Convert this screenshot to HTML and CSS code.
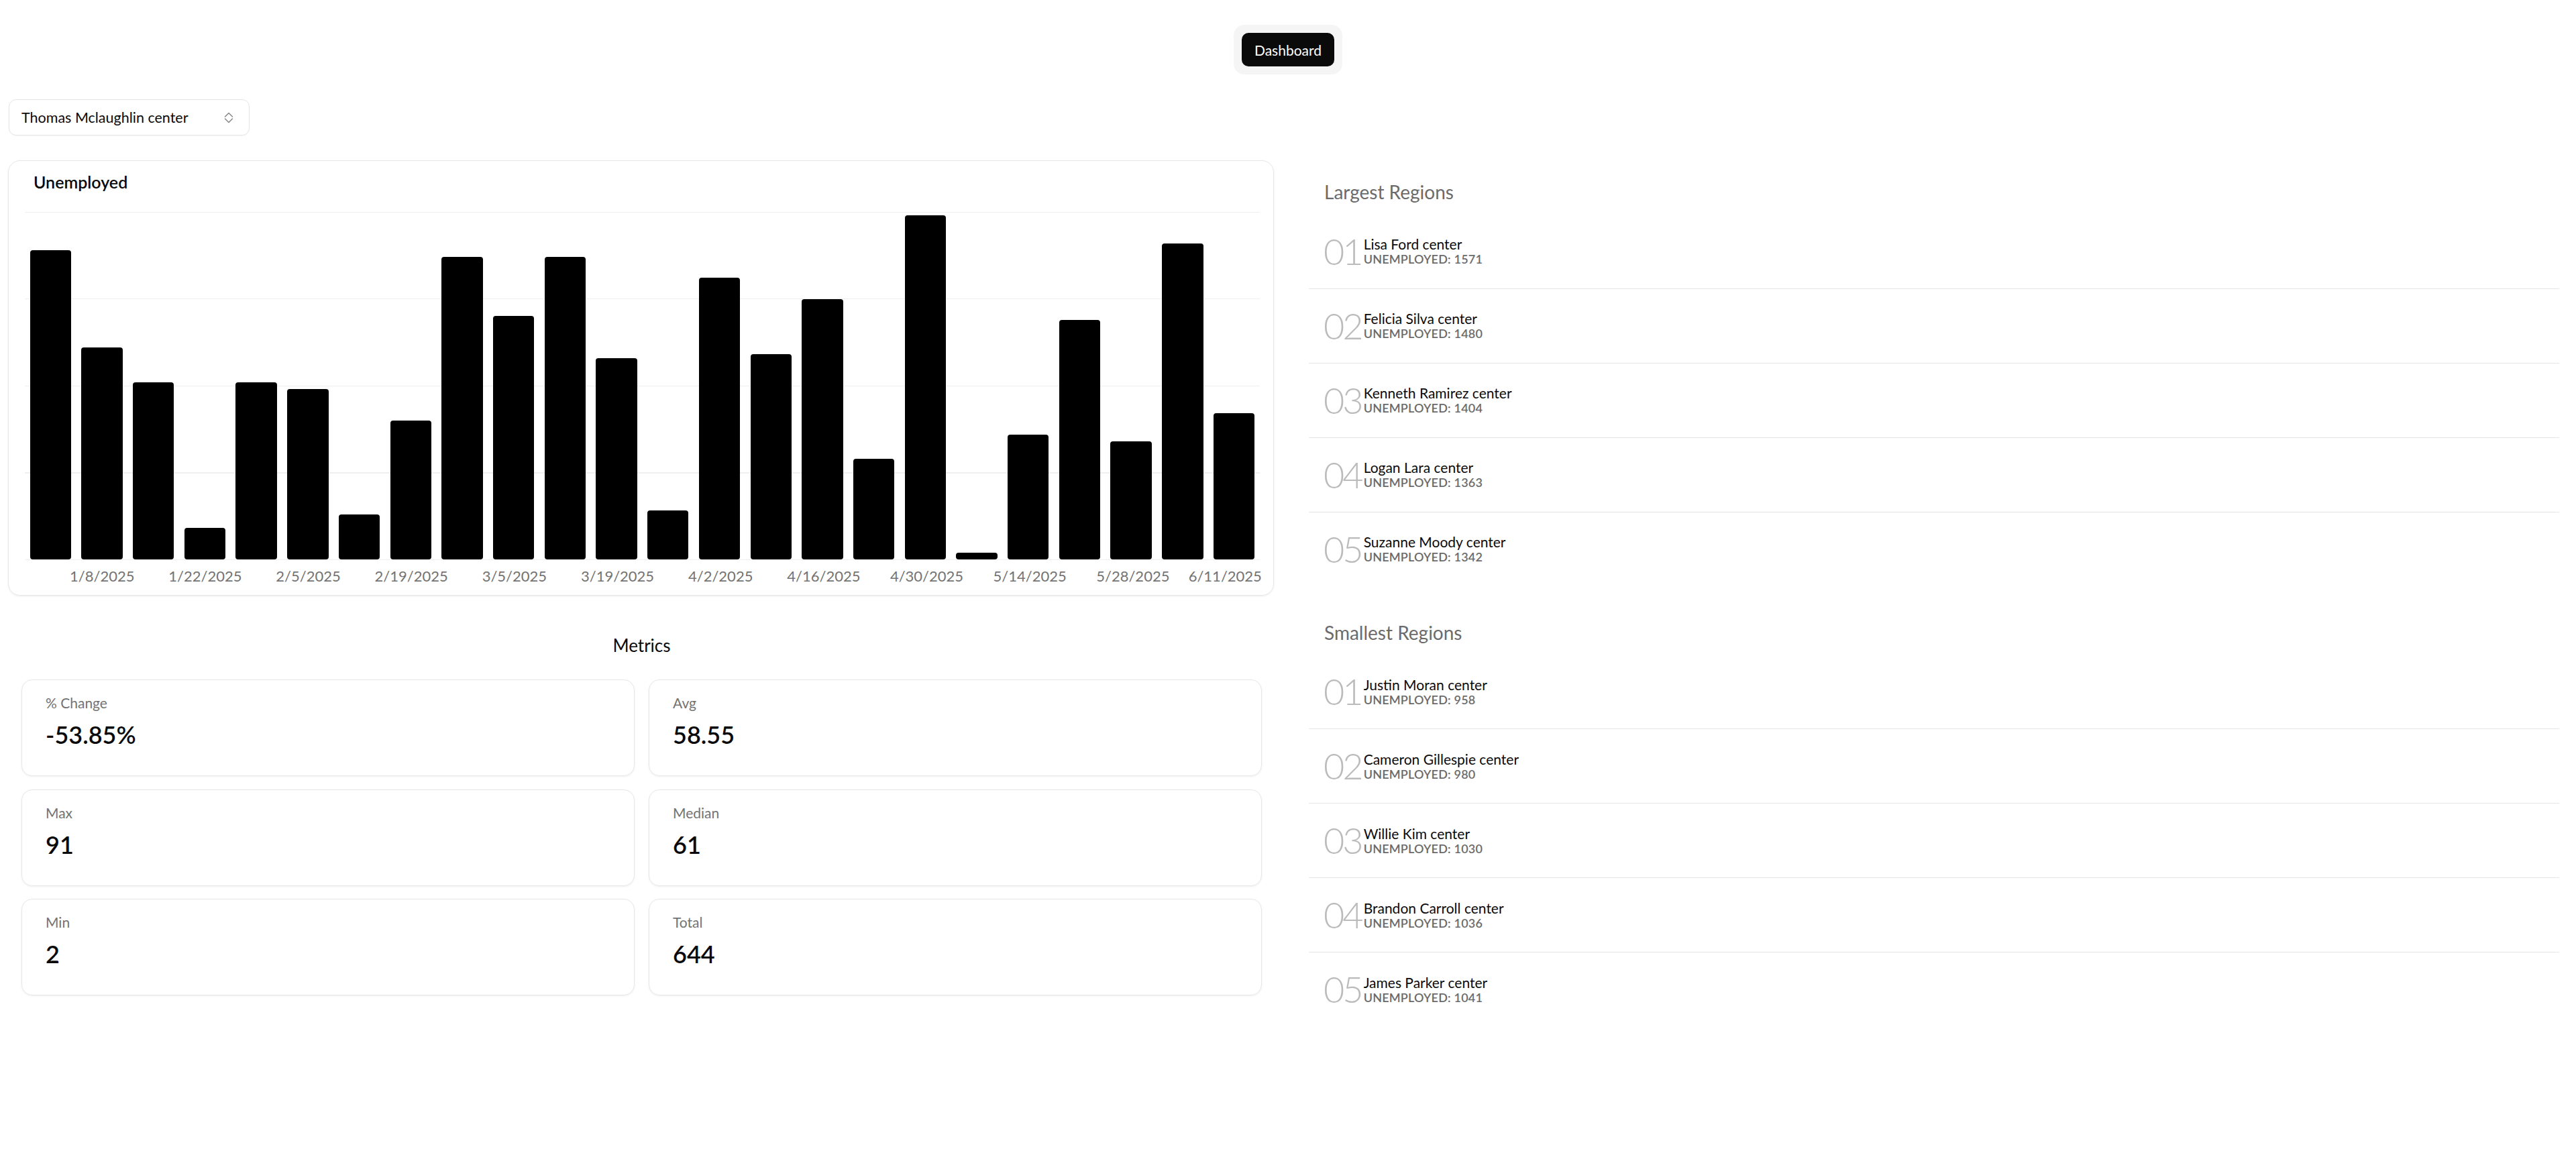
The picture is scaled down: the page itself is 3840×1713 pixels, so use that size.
FILE: index.html
```html
<!DOCTYPE html>
<html lang="en">
<head>
<meta charset="utf-8">
<title>Dashboard</title>
<link rel="stylesheet" href="styles.css">
</head>
<body>
<header class="header">
  <nav class="tabs">
    <span class="tab">Dashboard</span>
  </nav>
</header>
<main class="content">
  <div class="select">
    <span>Thomas Mclaughlin center</span>
    <svg class="chev" width="14" height="17" viewBox="0 0 14 17" fill="none" stroke="#8a8a8a" stroke-width="1.6" stroke-linecap="round" stroke-linejoin="round"><polyline points="1.5,7 7,1.5 12.5,7"/><polyline points="1.5,10 7,15.5 12.5,10"/></svg>
  </div>
  <div class="main">
    <section class="left">
      <div class="chart-card">
        <div class="chart-title">Unemployed</div>
        <div class="plot">
          <div class="col"><div class="bar" style="height:89%"></div></div>
          <div class="col"><div class="bar" style="height:61%"></div></div>
          <div class="col"><div class="bar" style="height:51%"></div></div>
          <div class="col"><div class="bar" style="height:9%"></div></div>
          <div class="col"><div class="bar" style="height:51%"></div></div>
          <div class="col"><div class="bar" style="height:49%"></div></div>
          <div class="col"><div class="bar" style="height:13%"></div></div>
          <div class="col"><div class="bar" style="height:40%"></div></div>
          <div class="col"><div class="bar" style="height:87%"></div></div>
          <div class="col"><div class="bar" style="height:70%"></div></div>
          <div class="col"><div class="bar" style="height:87%"></div></div>
          <div class="col"><div class="bar" style="height:58%"></div></div>
          <div class="col"><div class="bar" style="height:14%"></div></div>
          <div class="col"><div class="bar" style="height:81%"></div></div>
          <div class="col"><div class="bar" style="height:59%"></div></div>
          <div class="col"><div class="bar" style="height:75%"></div></div>
          <div class="col"><div class="bar" style="height:29%"></div></div>
          <div class="col"><div class="bar" style="height:99%"></div></div>
          <div class="col"><div class="bar" style="height:2%"></div></div>
          <div class="col"><div class="bar" style="height:36%"></div></div>
          <div class="col"><div class="bar" style="height:69%"></div></div>
          <div class="col"><div class="bar" style="height:34%"></div></div>
          <div class="col"><div class="bar" style="height:91%"></div></div>
          <div class="col"><div class="bar" style="height:42%"></div></div>
        </div>
        <div class="xaxis">
          <span></span><span>1/8/2025</span>
          <span></span><span>1/22/2025</span>
          <span></span><span>2/5/2025</span>
          <span></span><span>2/19/2025</span>
          <span></span><span>3/5/2025</span>
          <span></span><span>3/19/2025</span>
          <span></span><span>4/2/2025</span>
          <span></span><span>4/16/2025</span>
          <span></span><span>4/30/2025</span>
          <span></span><span>5/14/2025</span>
          <span></span><span>5/28/2025</span>
          <span></span><span class="last">6/11/2025</span>
        </div>
      </div>
      <div class="metrics">
        <h2 class="metrics-title">Metrics</h2>
        <div class="metric-grid">
          <div class="metric"><div class="metric-label">% Change</div><div class="metric-value">-53.85%</div></div>
          <div class="metric"><div class="metric-label">Avg</div><div class="metric-value">58.55</div></div>
          <div class="metric"><div class="metric-label">Max</div><div class="metric-value">91</div></div>
          <div class="metric"><div class="metric-label">Median</div><div class="metric-value">61</div></div>
          <div class="metric"><div class="metric-label">Min</div><div class="metric-value">2</div></div>
          <div class="metric"><div class="metric-label">Total</div><div class="metric-value">644</div></div>
        </div>
      </div>
    </section>
    <section class="right">
      <h3 class="regions-title first">Largest Regions</h3>
      <ul class="regions">
        <li class="region"><span class="rank">01</span><div class="info"><div class="name">Lisa Ford center</div><div class="sub">UNEMPLOYED: 1571</div></div></li>
        <li class="region"><span class="rank">02</span><div class="info"><div class="name">Felicia Silva center</div><div class="sub">UNEMPLOYED: 1480</div></div></li>
        <li class="region"><span class="rank">03</span><div class="info"><div class="name">Kenneth Ramirez center</div><div class="sub">UNEMPLOYED: 1404</div></div></li>
        <li class="region"><span class="rank">04</span><div class="info"><div class="name">Logan Lara center</div><div class="sub">UNEMPLOYED: 1363</div></div></li>
        <li class="region"><span class="rank">05</span><div class="info"><div class="name">Suzanne Moody center</div><div class="sub">UNEMPLOYED: 1342</div></div></li>
      </ul>
      <h3 class="regions-title">Smallest Regions</h3>
      <ul class="regions">
        <li class="region"><span class="rank">01</span><div class="info"><div class="name">Justin Moran center</div><div class="sub">UNEMPLOYED: 958</div></div></li>
        <li class="region"><span class="rank">02</span><div class="info"><div class="name">Cameron Gillespie center</div><div class="sub">UNEMPLOYED: 980</div></div></li>
        <li class="region"><span class="rank">03</span><div class="info"><div class="name">Willie Kim center</div><div class="sub">UNEMPLOYED: 1030</div></div></li>
        <li class="region"><span class="rank">04</span><div class="info"><div class="name">Brandon Carroll center</div><div class="sub">UNEMPLOYED: 1036</div></div></li>
        <li class="region"><span class="rank">05</span><div class="info"><div class="name">James Parker center</div><div class="sub">UNEMPLOYED: 1041</div></div></li>
      </ul>
    </section>
  </div>
</main>
</body>
</html>
```

FILE: styles.css
```css
* { box-sizing: border-box; }

body {
  margin: 0;
  background: #ffffff;
  color: #0a0a0a;
  font-family: Lato, "Open Sans", sans-serif;
}

.header {
  display: flex;
  justify-content: center;
  padding-top: 37px;
}

.tabs {
  display: flex;
  background: #f5f5f5;
  border-radius: 16px;
  padding: 12px;
}

.tab {
  display: flex;
  align-items: center;
  height: 50px;
  padding: 0 19px;
  border-radius: 10px;
  background: #0a0a0a;
  color: #ffffff;
  font-size: 21px;
}

.content {
  padding: 37px 25px 40px 12px;
}

.select {
  margin-left: 1px;
  width: 359px;
  height: 54px;
  display: flex;
  align-items: center;
  justify-content: space-between;
  padding: 0 23px 0 18px;
  border: 1px solid #e5e5e5;
  border-radius: 11px;
  box-shadow: 0 1px 2px rgba(0, 0, 0, 0.04);
  font-size: 21.5px;
}

.main {
  display: grid;
  grid-template-columns: 1887px 1fr;
  column-gap: 52px;
  margin-top: 37px;
  align-items: start;
}

/* chart card */
.chart-card {
  height: 649px;
  padding: 16px 20px 15px 24px;
  border: 1px solid #e7e7e7;
  border-radius: 18px;
  box-shadow: 0 1px 3px rgba(0, 0, 0, 0.08);
}

.chart-title {
  padding-left: 13px;
  font-size: 25px;
  font-weight: 600;
  line-height: 1.2;
}

.plot {
  margin-top: 30px;
  height: 519px;
  display: flex;
  background-image: repeating-linear-gradient(to bottom, #efefef 0, #efefef 1px, transparent 1px, transparent 129.5px);
}

.col {
  flex: 1;
  min-width: 0;
  display: flex;
  align-items: flex-end;
  justify-content: center;
  padding-bottom: 1px;
}

.bar {
  width: 80%;
  background: #000000;
  border-radius: 4px;
}

.xaxis {
  display: flex;
  margin-top: 11px;
  color: #737373;
  font-size: 22px;
  line-height: 1.2;
}

.xaxis span {
  flex: 1 1 0;
  min-width: 0;
  display: flex;
  justify-content: center;
  white-space: nowrap;
}

.xaxis span.last {
  justify-content: flex-end;
  margin-right: -3px;
}

/* metrics */
.metrics {
  padding: 0 18px 0 20px;
}

.metrics-title {
  margin: 59px 0 0;
  text-align: center;
  font-size: 26px;
  font-weight: 400;
  line-height: 1.2;
}

.metric-grid {
  display: grid;
  grid-template-columns: 1fr 1fr;
  column-gap: 21px;
  row-gap: 19.5px;
  margin-top: 35px;
}

.metric {
  height: 144px;
  padding: 21px 36px 0 35px;
  border: 1px solid #e7e7e7;
  border-radius: 16px;
  box-shadow: 0 1px 3px rgba(0, 0, 0, 0.07);
}

.metric-label {
  color: #737373;
  font-size: 21px;
  line-height: 1.2;
}

.metric-value {
  margin-top: 14px;
  font-size: 36px;
  font-weight: 600;
  line-height: 1.2;
}

/* regions */
.regions-title {
  margin: 53px 0 0;
  padding-left: 23px;
  color: #6b6b6b;
  font-size: 28px;
  font-weight: 400;
  line-height: 1.2;
}

.regions-title.first {
  margin-top: 31px;
}

.regions {
  list-style: none;
  margin: 16px 0 0;
  padding: 0;
}

.region {
  display: flex;
  align-items: center;
  padding: 28px 0 28px 22px;
  border-bottom: 1px solid #e5e5e5;
}

.region:last-child {
  border-bottom: none;
}

.rank {
  color: #bbbbbb;
  font-size: 54px;
  font-weight: 300;
  line-height: 54px;
  letter-spacing: -3px;
  margin-right: 3px;
}

.name {
  font-size: 21px;
  line-height: 1.2;
}

.sub {
  color: #6b6b6b;
  font-size: 18px;
  font-weight: 600;
  line-height: 1.2;
  letter-spacing: 0.2px;
}
```
